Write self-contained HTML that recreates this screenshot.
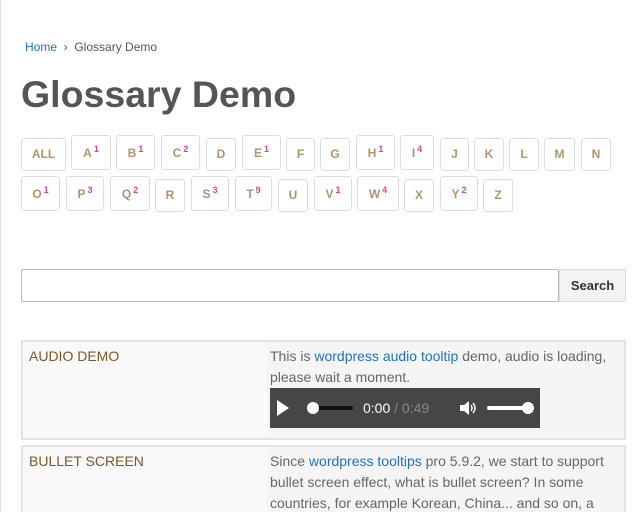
<!DOCTYPE html>
<html><head><style>
html,body{margin:0;width:640px;height:512px;overflow:hidden}
body{background:#fff;font-family:"Liberation Sans",sans-serif;position:relative}
.lb{position:absolute;left:0;top:0;width:1px;height:512px;background:#ddd}
.a{position:absolute}
.bc{left:25px;top:40px;font-size:12px;color:#555}
.bc span{color:#1e73be}
h1{position:absolute;left:21px;top:73px;margin:0;font-size:37.5px;color:#555;font-weight:bold;letter-spacing:0}
.k{position:absolute;border:1px solid #ddd;border-radius:3px;box-sizing:border-box;color:#b0946a;font-weight:bold;font-size:12px;text-align:center;line-height:31px;height:33px}
.k.s{height:35px;padding-top:2px}
.k sup{color:#e040a0;font-size:9px;font-weight:bold;margin-left:2px;vertical-align:5px;line-height:0}
.inp{left:21px;top:269px;width:538px;height:33px;border:1px solid #bbb;border-radius:2px;box-sizing:border-box}
.btn{left:559px;top:269px;width:67px;height:33px;border:1px solid #ddd;background:#f3f3f3;box-sizing:border-box;font-size:13px;font-weight:bold;color:#333;text-align:center;line-height:31px}
.row{position:absolute;left:21px;width:605px;border:2px solid #e2e2e2;box-sizing:border-box;background:#f7f7f7}
.c1{position:absolute;left:0;top:0;bottom:0;width:240px;border-right:2px solid #e6e6e6;background:#f9f9f9;color:#7a5a24;font-size:14px;padding:6px 6px}
.c2{position:absolute;left:244px;top:0;right:0;bottom:0;background:#f5f5f5;color:#666;font-size:14px;line-height:21px;padding:4px 4px 0 3px}
.c2 span{color:#1e73be}
.pl{position:absolute;left:270px;top:388px;width:270px;height:40px;background:#464646;color:#fff;font-size:14px}
</style></head><body>
<div class="lb"></div>
<div class="a bc"><span>Home</span> &nbsp;›&nbsp; Glossary Demo</div>
<h1>Glossary Demo</h1>

<div class="k" style="left:21px;top:138px;width:45px">ALL</div>
<div class="k s" style="left:71px;top:135px;width:40px">A<sup>1</sup></div>
<div class="k s" style="left:116px;top:135px;width:39px">B<sup>1</sup></div>
<div class="k s" style="left:161px;top:135px;width:39px">C<sup>2</sup></div>
<div class="k" style="left:206px;top:138px;width:30px">D</div>
<div class="k s" style="left:242px;top:135px;width:39px">E<sup>1</sup></div>
<div class="k" style="left:286px;top:138px;width:29px">F</div>
<div class="k" style="left:320px;top:138px;width:30px">G</div>
<div class="k s" style="left:356px;top:135px;width:39px">H<sup>1</sup></div>
<div class="k s" style="left:400px;top:135px;width:34px">I<sup>4</sup></div>
<div class="k" style="left:440px;top:138px;width:29px">J</div>
<div class="k" style="left:474px;top:138px;width:30px">K</div>
<div class="k" style="left:509px;top:138px;width:30px">L</div>
<div class="k" style="left:544px;top:138px;width:31px">M</div>
<div class="k" style="left:581px;top:138px;width:30px">N</div>

<div class="k s" style="left:21px;top:176px;width:39px">O<sup>1</sup></div>
<div class="k s" style="left:66px;top:176px;width:38px">P<sup>3</sup></div>
<div class="k s" style="left:110px;top:176px;width:40px">Q<sup>2</sup></div>
<div class="k" style="left:155px;top:179px;width:30px">R</div>
<div class="k s" style="left:191px;top:176px;width:38px">S<sup>3</sup></div>
<div class="k s" style="left:235px;top:176px;width:37px">T<sup>9</sup></div>
<div class="k" style="left:278px;top:179px;width:30px">U</div>
<div class="k s" style="left:314px;top:176px;width:38px">V<sup>1</sup></div>
<div class="k s" style="left:357px;top:176px;width:42px">W<sup>4</sup></div>
<div class="k" style="left:404px;top:179px;width:30px">X</div>
<div class="k s" style="left:440px;top:176px;width:38px">Y<sup>2</sup></div>
<div class="k" style="left:483px;top:179px;width:30px">Z</div>

<div class="a inp"></div>
<div class="a btn">Search</div>

<div class="row" style="top:340px;height:100px">
 <div class="c1">AUDIO DEMO</div>
 <div class="c2">This is <span>wordpress audio tooltip</span> demo, audio is loading, please wait a moment.</div>
</div>
<div class="pl">
 <svg class="a" style="left:6px;top:12px" width="14" height="16"><path d="M1 0L13 8L1 16Z" fill="#fff"/></svg>
 <div class="a" style="left:43px;top:18px;width:40px;height:4px;background:#111;border-radius:2px"></div>
 <div class="a" style="left:37px;top:14px;width:12px;height:12px;background:#fff;border-radius:6px"></div>
 <div class="a" style="left:93px;top:12px">0:00 <span style="color:#888">/ 0:49</span></div>
 <svg class="a" style="left:189px;top:12px" width="18" height="16"><path d="M1 5H5L10 1V15L5 11H1Z" fill="#fff"/><path d="M12 5Q14 8 12 11M14 3Q18 8 14 13" stroke="#fff" stroke-width="1.5" fill="none"/></svg>
 <div class="a" style="left:217px;top:18px;width:42px;height:4px;background:#fff;border-radius:2px"></div>
 <div class="a" style="left:252px;top:14px;width:12px;height:12px;background:#fff;border-radius:6px"></div>
</div>
<div class="row" style="top:445px;height:80px">
 <div class="c1">BULLET SCREEN</div>
 <div class="c2">Since <span>wordpress tooltips</span> pro 5.9.2, we start to support bullet screen effect, what is bullet screen? In some countries, for example Korean, China... and so on, a</div>
</div>
</body></html>
